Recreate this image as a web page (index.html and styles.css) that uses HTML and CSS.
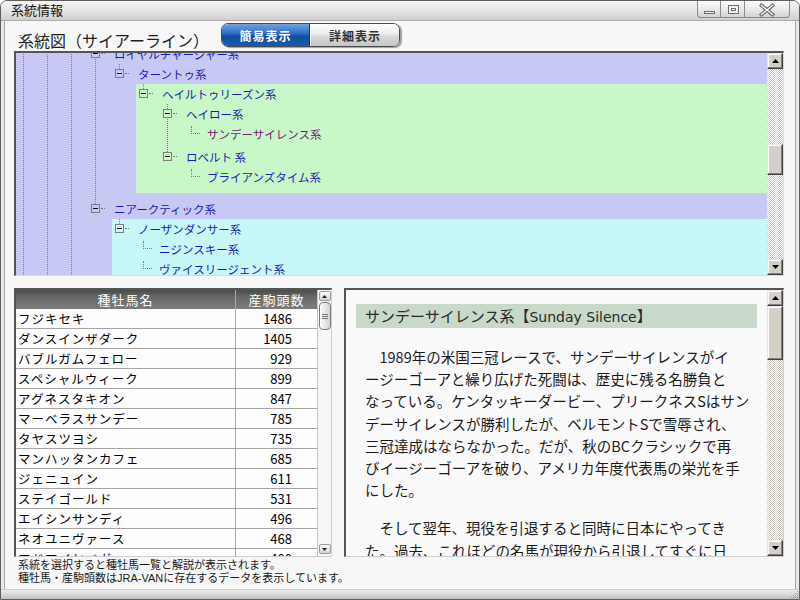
FILE: index.html
```html
<!DOCTYPE html>
<html lang="ja">
<head>
<meta charset="utf-8">
<title>系統情報</title>
<link rel="stylesheet" href="styles.css">
</head>
<body>
<div class="window">
  <div class="titlebar">
    <span class="title">系統情報</span>
    <div class="winbtns">
      <span class="wb">
        <svg width="22" height="16" viewBox="0 0 22 16"><rect x="6.5" y="10.5" width="10" height="2" fill="#f2f2f2" stroke="#6e6e6e"/></svg>
      </span>
      <span class="wb">
        <svg width="23" height="16" viewBox="0 0 23 16"><rect x="7.5" y="4.5" width="10" height="8" fill="#f2f2f2" stroke="#6e6e6e"/><rect x="10.5" y="7.5" width="4" height="2" fill="none" stroke="#6e6e6e"/></svg>
      </span>
      <span class="wb close">
        <svg width="44" height="16" viewBox="0 0 44 16"><path d="M16.5 4.5 L27.5 13.5 M27.5 4.5 L16.5 13.5" stroke="#6a6a6a" stroke-width="3.6" stroke-linecap="square"/><path d="M16.5 4.5 L27.5 13.5 M27.5 4.5 L16.5 13.5" stroke="#f4f4f4" stroke-width="1.4" stroke-linecap="square"/></svg>
      </span>
    </div>
  </div>

  <div class="client">
    <div class="head">
      <h1 class="heading">系統図（サイアーライン）</h1>
      <div class="toggle">
        <span class="tg on">簡易表示</span>
        <span class="tg off">詳細表示</span>
      </div>
    </div>

    <div class="tree-panel">
      <div class="tree-view">
        <div class="tree">
          <div class="node open cont3">
            <div class="row l3"><i class="exp"></i><span class="t">ロイヤルチャージャー系</span></div>
            <div class="node open">
              <div class="row l4"><i class="exp"></i><span class="t">ターントゥ系</span></div>
              <div class="node open green">
                <div class="row l5"><i class="exp"></i><span class="t">ヘイルトゥリーズン系</span></div>
                <div class="node open cont6">
                  <div class="row l6"><i class="exp"></i><span class="t">ヘイロー系</span></div>
                  <div class="row leaf l7"><i class="conn"></i><span class="t sel">サンデーサイレンス系</span></div>
                </div>
                <div class="node open">
                  <div class="row l6"><i class="exp"></i><span class="t">ロベルト 系</span></div>
                  <div class="row leaf l7"><i class="conn"></i><span class="t">ブライアンズタイム系</span></div>
                </div>
              </div>
            </div>
          </div>
          <div class="node open">
            <div class="row l3"><i class="exp"></i><span class="t">ニアークティック系</span></div>
            <div class="node open cyan">
              <div class="row l4"><i class="exp"></i><span class="t">ノーザンダンサー系</span></div>
              <div class="row leaf l5"><i class="conn"></i><span class="t">ニジンスキー系</span></div>
              <div class="row leaf l5"><i class="conn"></i><span class="t">ヴァイスリージェント系</span></div>
            </div>
          </div>
        </div>
      </div>
      <div class="vscroll">
        <span class="sb-btn"><svg width="7" height="4" viewBox="0 0 7 4"><polygon points="3.5,0 7,4 0,4" fill="#000"/></svg></span>
        <span class="sb-thumb tree-thumb"></span>
        <span class="sb-btn down"><svg width="7" height="4" viewBox="0 0 7 4"><polygon points="0,0 7,0 3.5,4" fill="#000"/></svg></span>
      </div>
    </div>

    <div class="bottom">
      <div class="list-panel">
        <div class="list">
          <div class="lhead"><span class="c1">種牡馬名</span><span class="c2">産駒頭数</span></div>
          <div class="lrow"><span class="c1">フジキセキ</span><span class="c2">1486</span></div>
          <div class="lrow"><span class="c1">ダンスインザダーク</span><span class="c2">1405</span></div>
          <div class="lrow"><span class="c1">バブルガムフェロー</span><span class="c2">929</span></div>
          <div class="lrow"><span class="c1">スペシャルウィーク</span><span class="c2">899</span></div>
          <div class="lrow"><span class="c1">アグネスタキオン</span><span class="c2">847</span></div>
          <div class="lrow"><span class="c1">マーベラスサンデー</span><span class="c2">785</span></div>
          <div class="lrow"><span class="c1">タヤスツヨシ</span><span class="c2">735</span></div>
          <div class="lrow"><span class="c1">マンハッタンカフェ</span><span class="c2">685</span></div>
          <div class="lrow"><span class="c1">ジェニュイン</span><span class="c2">611</span></div>
          <div class="lrow"><span class="c1">ステイゴールド</span><span class="c2">531</span></div>
          <div class="lrow"><span class="c1">エイシンサンディ</span><span class="c2">496</span></div>
          <div class="lrow"><span class="c1">ネオユニヴァース</span><span class="c2">468</span></div>
          <div class="lrow"><span class="c1">アドマイヤベガ</span><span class="c2">400</span></div>
        </div>
        <div class="mscroll">
          <span class="ms-btn"><svg width="5" height="3" viewBox="0 0 5 3"><polygon points="2.5,0 5,3 0,3" fill="#222"/></svg></span>
          <span class="ms-thumb"></span>
          <span class="ms-btn down"><svg width="5" height="3" viewBox="0 0 5 3"><polygon points="0,0 5,0 2.5,3" fill="#222"/></svg></span>
        </div>
      </div>

      <div class="desc-panel">
        <div class="desc">
          <div class="band">サンデーサイレンス系【<span class="latin">Sunday Silence</span>】</div>
          <p class="para">　1989年の米国三冠レースで、サンデーサイレンスがイ<br>ージーゴーアと繰り広げた死闘は、歴史に残る名勝負と<br>なっている。ケンタッキーダービー、プリークネスSはサン<br>デーサイレンスが勝利したが、ベルモントSで雪辱され、<br>三冠達成はならなかった。だが、秋のBCクラシックで再<br>びイージーゴーアを破り、アメリカ年度代表馬の栄光を手<br>にした。</p>
          <p class="para">　そして翌年、現役を引退すると同時に日本にやってき<br>た。過去、これほどの名馬が現役から引退してすぐに日<br>本で種牡馬となった例はなかった。</p>
        </div>
        <div class="vscroll">
          <span class="sb-btn"><svg width="7" height="4" viewBox="0 0 7 4"><polygon points="3.5,0 7,4 0,4" fill="#000"/></svg></span>
          <span class="sb-thumb desc-thumb"></span>
          <span class="sb-btn down"><svg width="7" height="4" viewBox="0 0 7 4"><polygon points="0,0 7,0 3.5,4" fill="#000"/></svg></span>
        </div>
      </div>
    </div>

    <div class="notes">
      <p>系統を選択すると種牡馬一覧と解説が表示されます。</p>
      <p>種牡馬・産駒頭数はJRA-VANに存在するデータを表示しています。</p>
    </div>
  </div>

  <div class="frame-bottom">
    <svg class="grip" width="9" height="9" viewBox="0 0 9 9"><g fill="#9a9a9a"><rect x="7" y="1" width="1" height="1"/><rect x="5" y="3" width="1" height="1"/><rect x="7" y="3" width="1" height="1"/><rect x="3" y="5" width="1" height="1"/><rect x="5" y="5" width="1" height="1"/><rect x="7" y="5" width="1" height="1"/><rect x="1" y="7" width="1" height="1"/><rect x="3" y="7" width="1" height="1"/><rect x="5" y="7" width="1" height="1"/><rect x="7" y="7" width="1" height="1"/></g></svg>
  </div>
</div>
</body>
</html>
```

FILE: styles.css
```css
* { box-sizing: border-box; }

html, body {
  margin: 0;
  padding: 0;
  width: 800px;
  height: 600px;
  overflow: hidden;
  background: #ffffff;
  font-family: "Noto Sans CJK JP", "Noto Sans", sans-serif;
}

.window {
  width: 800px;
  height: 600px;
  border: 1px solid #5f5f5f;
  border-radius: 7px 7px 0 0;
  background: #f7f7f7;
  display: flex;
  flex-direction: column;
  overflow: hidden;
}

/* ---------- title bar ---------- */
.titlebar {
  flex: none;
  height: 20px;
  display: flex;
  align-items: flex-start;
  padding-left: 10px;
  background: linear-gradient(#f5f5f5, #e4e4e4 55%, #cfcfcf);
  border-bottom: 1px solid #adadad;
}
.title {
  font-size: 13px;
  line-height: 18px;
  color: #111;
}
.winbtns {
  margin-left: auto;
  margin-right: 9px;
  display: flex;
  height: 17px;
}
.wb {
  width: 24px;
  height: 17px;
  display: flex;
  align-items: center;
  justify-content: center;
  border: 1px solid #8a8a8a;
  border-top: none;
  border-left: none;
  background: linear-gradient(#fcfcfc, #e6e6e6 60%, #d2d2d2);
}
.wb:first-child {
  border-left: 1px solid #8a8a8a;
  border-bottom-left-radius: 4px;
}
.wb.close {
  width: 45px;
  border-bottom-right-radius: 4px;
}

/* ---------- client area ---------- */
.client {
  flex: 1;
  display: flex;
  flex-direction: column;
  min-height: 0;
  border-left: 3px solid #e9e9e9;
  border-right: 3px solid #e9e9e9;
  box-shadow: inset 1px 0 0 #a4a4a4, inset -1px 0 0 #a4a4a4;
  padding: 0 12px 0 10px;
}

.head {
  flex: none;
  height: 30px;
  display: flex;
  align-items: flex-start;
}
.heading {
  margin: 9px 0 0 4px;
  font-size: 16px;
  line-height: 20px;
  font-weight: normal;
  color: #1e1e1e;
  white-space: nowrap;
}
.toggle {
  margin: 2px 0 0 12px;
  height: 24px;
  display: flex;
  border: 1px solid #4a4a4a;
  border-radius: 7px;
  overflow: hidden;
  box-shadow: 2px 1px 1px rgba(0, 0, 0, 0.35);
}
.tg {
  width: 88px;
  display: flex;
  align-items: center;
  justify-content: center;
  font-size: 12px;
  font-weight: bold;
  letter-spacing: 1px;
}
.tg.on {
  color: #ffffff;
  background: linear-gradient(#6ea2e2, #2a6cc2 45%, #104c9e 55%, #1a5cb2);
  border-right: 1px solid #0c3a7a;
}
.tg.off {
  width: 89px;
  color: #333;
  background: linear-gradient(#fefefe, #ececec 45%, #d9d9d9 55%, #c6c6c6);
  border-left: 1px solid #ffffff;
}

/* ---------- tree ---------- */
.tree-panel {
  flex: none;
  height: 225px;
  display: flex;
  border-style: solid;
  border-width: 2px 1px 1px 2px;
  border-color: #555 #dadada #dadada #555;
}
.tree-view {
  flex: 1;
  overflow: hidden;
  background: #c8c8f5;
}
.tree {
  margin-top: -9px;
  padding-bottom: 40px;
  --dv: repeating-linear-gradient(to bottom, #7e7e7e 0 1px, transparent 1px 2px);
  background-image: var(--dv), var(--dv), var(--dv);
  background-position: 7px 0, 31px 0, 55px 0;
  background-size: 1px 100%;
  background-repeat: no-repeat;
}
.node.open { padding-bottom: 3px; }
.node.cont3 {
  background-image: var(--dv);
  background-position: 79px 15px;
  background-size: 1px calc(100% - 15px);
  background-repeat: no-repeat;
}
.node.cont6 {
  background-image: var(--dv);
  background-position: 151px 15px;
  background-size: 1px calc(100% - 15px);
  background-repeat: no-repeat;
}
.node.green {
  background: linear-gradient(to right, transparent 120px, #c8f7c8 120px);
}
.node.cyan {
  background: linear-gradient(to right, transparent 96px, #c8f7f7 96px);
}

.row {
  height: 20px;
  display: flex;
  align-items: flex-start;
  white-space: nowrap;
}
.row.l3 { padding-left: 75px; }
.row.l4 { padding-left: 99px; }
.row.l5 { padding-left: 123px; }
.row.l6 { padding-left: 147px; }
.row.leaf.l5 { padding-left: 127px; }
.row.leaf.l7 { padding-left: 175px; }

.exp {
  position: relative;
  flex: none;
  width: 9px;
  height: 9px;
  margin-top: 5px;
  border: 1px solid #7e7e7e;
  background: linear-gradient(#000, #000) center / 5px 1px no-repeat;
}
.exp::before {
  content: "";
  position: absolute;
  left: 3px;
  top: -6px;
  height: 5px;
  border-left: 1px dotted #7e7e7e;
}
.exp::after {
  content: "";
  position: absolute;
  left: 9px;
  top: 3px;
  width: 4px;
  border-top: 1px dotted #7e7e7e;
}
.conn {
  flex: none;
  width: 9px;
  height: 8px;
  margin-top: 2px;
  border-left: 1px dotted #7e7e7e;
  border-bottom: 1px dotted #7e7e7e;
}
.t {
  margin-left: 14px;
  font-size: 11.5px;
  line-height: 20px;
  color: #1a1ab0;
}
.leaf .t { margin-left: 7px; }
.t.sel { color: #6e1a72; }

/* ---------- scrollbars (classic) ---------- */
.vscroll {
  flex: none;
  width: 16px;
  display: flex;
  flex-direction: column;
  background: repeating-conic-gradient(#cfcbc3 0 25%, #ffffff 0 50%) 0 0 / 2px 2px;
}
.sb-btn, .sb-thumb {
  flex: none;
  width: 16px;
  background: #d4d0c8;
  border: 1px solid;
  border-color: #e6e6e6 #404040 #404040 #e6e6e6;
  box-shadow: inset -1px -1px 0 #808080, inset 1px 1px 0 #ffffff;
}
.sb-btn {
  height: 16px;
  display: flex;
  align-items: center;
  justify-content: center;
}
.sb-btn.down { margin-top: auto; }
.tree-thumb { height: 31px; margin-top: 75px; }
.desc-thumb { height: 54px; }

/* ---------- bottom ---------- */
.bottom {
  flex: none;
  height: 269px;
  margin-top: 12px;
  display: flex;
  gap: 12px;
}
.list-panel {
  flex: none;
  width: 318px;
  display: flex;
  border-style: solid;
  border-width: 2px 1px 1px 2px;
  border-color: #555 #cfcfcf #cfcfcf #555;
  background: #ffffff;
}
.list {
  width: 301px;
  overflow: hidden;
  background: #fdfdfd;
}
.lhead {
  height: 19px;
  display: flex;
  background: linear-gradient(#4c4c4c, #6a6a6a 40%, #7c7c7c);
  color: #ffffff;
  font-size: 13px;
  line-height: 19px;
  letter-spacing: 1px;
}
.lhead .c1 {
  width: 220px;
  text-align: center;
  border-right: 1px solid #a8a8a8;
}
.lhead .c2 {
  width: 81px;
  text-align: center;
}
.lrow {
  height: 20px;
  display: flex;
  border-bottom: 1px solid #a6a6a6;
  font-size: 12.5px;
  line-height: 19px;
  color: #000;
  white-space: nowrap;
}
.lrow .c1 {
  width: 220px;
  padding-left: 2px;
  letter-spacing: 1px;
  border-right: 1px solid #a6a6a6;
}
.lrow .c2 {
  width: 81px;
  text-align: right;
  padding-right: 25px;
  font-size: 13px;
}

.mscroll {
  flex: none;
  width: 14px;
  display: flex;
  flex-direction: column;
  align-items: center;
  background: #f6f6f6;
  border-left: 1px solid #c4c4c4;
}
.ms-btn {
  width: 12px;
  height: 10px;
  margin-top: 1px;
  display: flex;
  align-items: center;
  justify-content: center;
  border: 1px solid #9a9a9a;
  border-radius: 2px;
  background: linear-gradient(#fafafa, #d6d6d6);
}
.ms-btn.down { margin-top: auto; margin-bottom: 2px; }
.ms-thumb {
  width: 12px;
  height: 28px;
  margin-top: 1px;
  border: 1px solid #7a7a7a;
  border-radius: 4px;
  background:
    repeating-linear-gradient(to bottom, #777 0 1px, transparent 1px 2px) center / 6px 5px no-repeat,
    linear-gradient(to right, #fdfdfd, #d2d2d2);
}

.desc-panel {
  flex: 1;
  display: flex;
  border-style: solid;
  border-width: 2px 1px 1px 2px;
  border-color: #555 #cfcfcf #cfcfcf #555;
  background: #fafafa;
}
.desc {
  flex: 1;
  overflow: hidden;
  padding: 14px 10px 0 10px;
}
.band {
  height: 24px;
  padding-left: 9px;
  background: #c8d9c9;
  font-size: 15px;
  line-height: 24px;
  color: #2a2a2a;
  white-space: nowrap;
}
.latin {
  font-family: "DejaVu Sans", "Noto Sans CJK JP", sans-serif;
  font-size: 14px;
}
.para {
  margin: 18px 0 0 0;
  padding-left: 9px;
  font-size: 14.5px;
  line-height: 22.2px;
  color: #1a1a1a;
  white-space: nowrap;
}
.para + .para { margin-top: 16px; }

/* ---------- notes ---------- */
.notes {
  flex: 1;
  padding: 2px 0 0 4px;
  font-family: "Liberation Sans", "Noto Sans CJK JP", sans-serif;
  font-size: 11px;
  line-height: 13px;
  color: #1a1a1a;
}
.notes p { margin: 0; white-space: nowrap; }

/* ---------- bottom frame ---------- */
.frame-bottom {
  flex: none;
  height: 10px;
  display: flex;
  justify-content: flex-end;
  align-items: flex-end;
  background: linear-gradient(#ececec, #d8d8d8 50%, #c0c0c0);
  border-top: 1px solid #cdcdcd;
}
.grip { display: block; }
```
